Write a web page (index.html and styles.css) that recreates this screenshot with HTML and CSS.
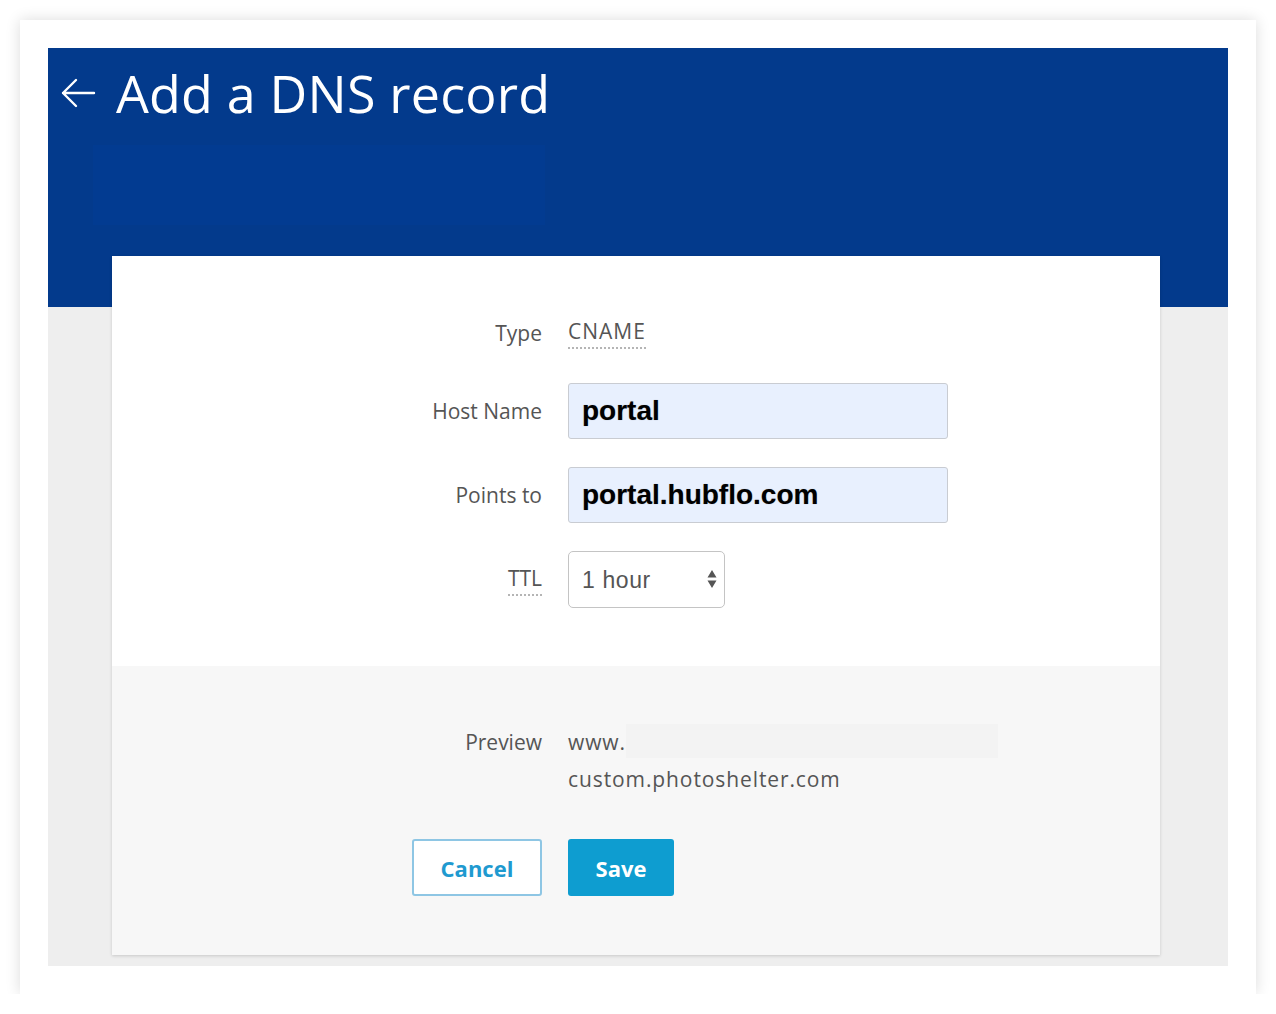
FILE: index.html
```html
<!DOCTYPE html>
<html>
<head>
  <meta charset="UTF-8">
  <meta name="viewport" content="width=device-width, initial-scale=1.0">
  <title>Add a DNS record</title>
  <link rel="stylesheet" href="styles.css">
</head>
<body>
  <div class="frame">
    <div class="panel">
      <!-- Blue page header with back arrow -->
      <header class="hero">
        <h1 class="title">
          <a class="back" href="#">
            <svg width="36" height="30" viewBox="0 0 36 30">
              <path d="M34 15H3M16 2L3 15l13 13" fill="none" stroke="#fff" stroke-width="2.4" stroke-linecap="round" stroke-linejoin="round"/>
            </svg>
          </a>
          Add a DNS record
        </h1>
        <div class="subtitle"></div>
      </header>

      <form class="card" id="dnsForm">
        <div class="fields">
          <div class="row row-type">
            <span class="label">Type</span>
            <span class="value dotted">CNAME</span>
          </div>
          <div class="row">
            <label class="label" for="hostName">Host Name</label>
            <input class="field" id="hostName" type="text" value="portal">
          </div>
          <div class="row">
            <label class="label" for="pointsTo">Points to</label>
            <input class="field" id="pointsTo" type="text" value="portal.hubflo.com">
          </div>
          <div class="row">
            <label class="label dotted" for="ttl">TTL</label>
            <div class="select-wrap">
              <select id="ttl" class="select">
                <option>1 hour</option>
                <option>4 hours</option>
                <option>1 day</option>
              </select>
              <svg class="arrows" width="10" height="20" viewBox="0 0 10 20">
                <path d="M5 1L9.5 8.5H0.5z M5 19L9.5 11.5H0.5z" fill="#555"/>
              </svg>
            </div>
          </div>
        </div>

        <div class="footer">
          <div class="row row-preview">
            <span class="label">Preview</span>
            <div class="preview">
              <div class="preview-line">www.<span class="preview-host"></span></div>
              <div>custom.photoshelter.com</div>
            </div>
          </div>
          <div class="row row-actions">
            <div class="label">
              <button type="button" class="btn btn-cancel">Cancel</button>
            </div>
            <button type="submit" class="btn btn-save">Save</button>
          </div>
        </div>
      </form>
    </div>
  </div>

  <script>
    document.getElementById('dnsForm').addEventListener('submit', function(e) {
      e.preventDefault();
    });
  </script>
</body>
</html>
```

FILE: styles.css
```css
body {
  margin: 0;
  background-color: #fff;
  font-family: "Open Sans", Arial, sans-serif;
}
.frame {
  width: 1180px;
  height: 918px;
  margin: 20px 0 0 20px;
  padding: 28px;
  background-color: #fff;
  box-shadow: 0 0 14px rgba(0, 0, 0, 0.14);
}
.panel {
  height: 918px;
  background-color: #eee;
}
.hero {
  height: 259px;
  background-color: #033a8c;
  overflow: hidden;
}
.title {
  display: flex;
  align-items: center;
  margin: 0;
  padding: 14px 0 0 12px;
  height: 62px;
  color: #fff;
  font-size: 52px;
  font-weight: 400;
  letter-spacing: 0.2px;
  line-height: 62px;
}
.back {
  display: flex;
  margin-right: 20px;
}
.subtitle {
  width: 452px;
  height: 80px;
  margin: 21px 0 0 45px;
  background-color: #023b91;
}
.card {
  width: 1048px;
  margin: -51px 0 0 64px;
  background-color: #fff;
  box-shadow: 0 1px 3px rgba(0, 0, 0, 0.16);
}
.fields {
  padding: 55px 0 58px;
  display: flex;
  flex-direction: column;
  gap: 28px;
}
.row {
  display: grid;
  grid-template-columns: 430px 1fr;
  column-gap: 26px;
  align-items: center;
}
.row-type {
  height: 44px;
}
.label {
  text-align: right;
  justify-self: end;
  color: #555;
  font-size: 21px;
}
.value {
  justify-self: start;
  color: #555;
  font-size: 21px;
  letter-spacing: 1px;
}
.dotted {
  padding-bottom: 2px;
  border-bottom: 2px dotted #b5b5b5;
}
.field {
  box-sizing: border-box;
  width: 380px;
  height: 56px;
  padding: 0 13px;
  background-color: #e8f0fe;
  border: 1px solid #c9ccd2;
  border-radius: 3px;
  color: #000;
  font-family: "Liberation Sans", Arial, sans-serif;
  font-size: 28px;
  font-weight: 700;
  text-shadow: 0 0 1px rgba(0, 0, 0, 0.35);
}
.select-wrap {
  position: relative;
  width: 157px;
}
.select {
  box-sizing: border-box;
  width: 157px;
  height: 57px;
  padding: 0 0 0 13px;
  -webkit-appearance: none;
  appearance: none;
  background-color: #fff;
  border: 1px solid #c4c4c4;
  border-radius: 5px;
  color: #555;
  font-family: "Liberation Sans", Arial, sans-serif;
  font-size: 23px;
  letter-spacing: 0.6px;
}
.arrows {
  position: absolute;
  right: 8px;
  top: 18px;
  pointer-events: none;
}
.footer {
  padding: 58px 0 59px;
  background-color: #f7f7f7;
}
.row-preview {
  align-items: start;
  line-height: 37px;
}
.preview {
  color: #555;
  font-size: 21px;
  letter-spacing: 0.9px;
}
.preview-line {
  display: flex;
}
.preview-host {
  flex: 0 0 372px;
  height: 34px;
  background-color: #f3f3f3;
}
.row-actions {
  margin-top: 41px;
}
.btn {
  box-sizing: border-box;
  height: 57px;
  border-radius: 3px;
  font-family: "Open Sans", Arial, sans-serif;
  font-size: 22px;
  font-weight: 700;
  cursor: pointer;
}
.btn-cancel {
  width: 130px;
  background-color: #fff;
  border: 2px solid #8ec6e4;
  color: #1f9ad0;
}
.btn-save {
  justify-self: start;
  width: 106px;
  background-color: #0e9dd0;
  border: none;
  color: #fff;
}
```
